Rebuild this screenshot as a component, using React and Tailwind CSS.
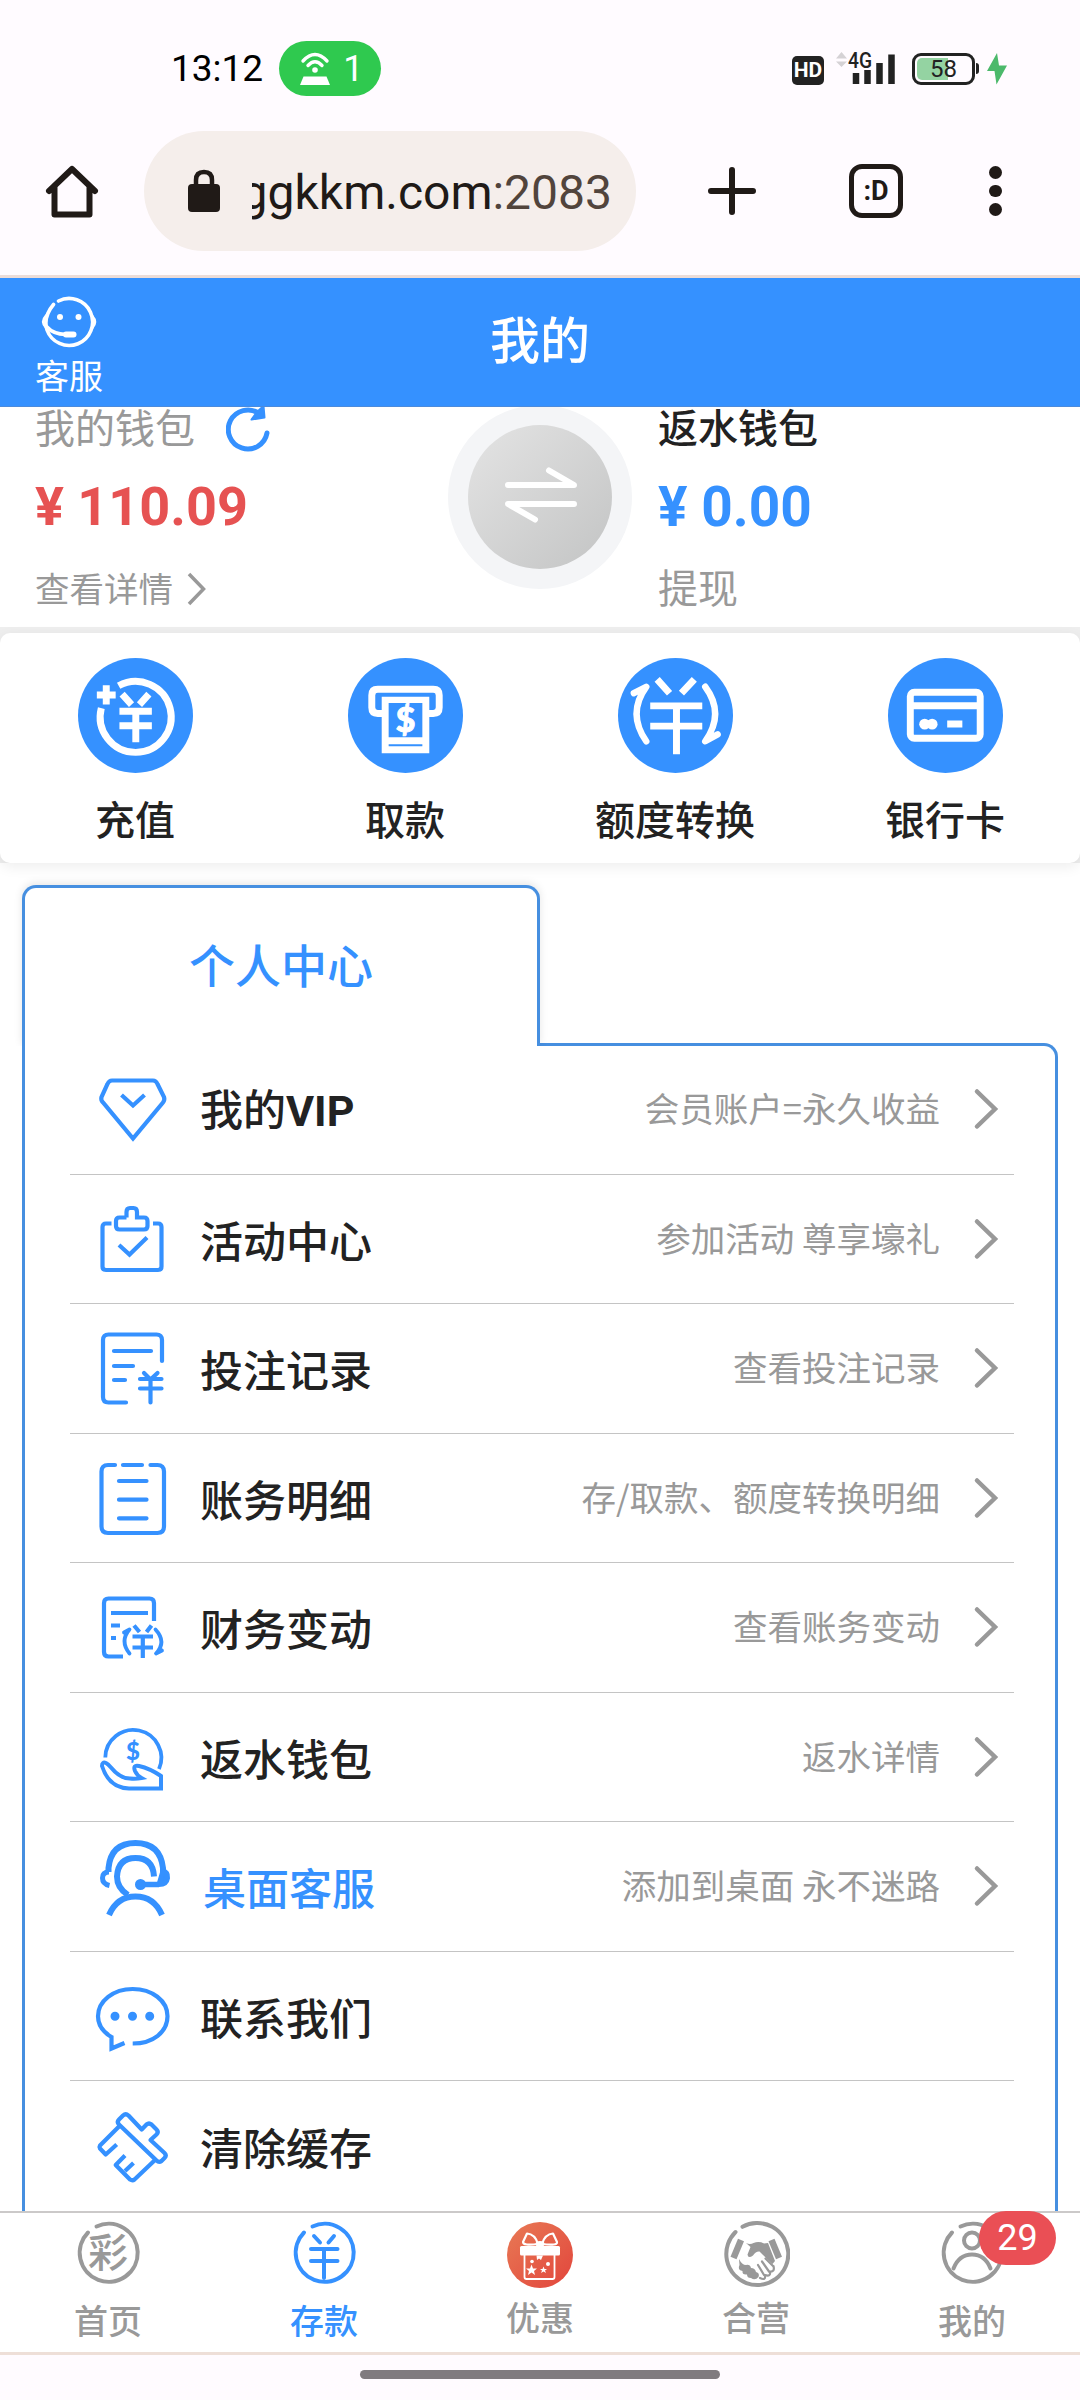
import { useState } from 'react';

const BLUE = '#3591ff';

const StatusBar = () => (
  <div className="flex h-[131px] items-start pt-[41px] pl-[171px] pr-[73px] font-[Roboto]">
    <span className="text-[37px] leading-[56px] text-black">13:12</span>
    <div className="ml-[16px] flex h-[55px] w-[102px] items-center rounded-full bg-[#2fc94f] pl-[19px]">
      <svg width="34" height="36" viewBox="0 0 34 36" fill="none" stroke="#fff" strokeWidth="3.4">
        <path d="M5 10Q17 -3 29 10M10 14.5Q17 7 24 14.5" strokeLinecap="round" />
        <circle cx="17" cy="19" r="2.8" fill="#fff" stroke="none" />
        <path d="M5.5 25.500H28.500L32 34H2Z" fill="#fff" stroke="none" />
      </svg>
      <span className="ml-[11px] text-[36px] leading-none text-white">1</span>
    </div>
    <div className="mt-[11px] ml-auto flex h-[33px] items-center">
      <span className="mt-[3px] h-[29px] w-[32px] rounded-[5px] bg-[#222] text-center text-[21px] leading-[29px] font-bold text-white">HD</span>
      <svg className="ml-[12px]" width="62" height="33" viewBox="0 0 62 33">
        <path d="M0 6.500 5.500 0 11 6.500ZM0 9.500H11L5.500 15Z" fill="#d5d2d5" />
        <text x="12" y="15.500" fontSize="22" fontWeight="500" fontFamily="Roboto" fill="#222" textLength="24" lengthAdjust="spacingAndGlyphs">4G</text>
        <path d="M20 21V32M31.500 18V32M43.500 11V32M55.500 2.500V32" stroke="#222" strokeWidth="6.500" />
      </svg>
      <div className="ml-[14px] flex h-[32px] w-[63px] items-center rounded-[9px] border-[3px] border-[#222] p-[2px]">
        <div className="h-full w-[31px] rounded-l-[5px] bg-[#94d3a2]"></div>
        <span className="-ml-[18px] text-[24px] leading-none text-[#222]">58</span>
      </div>
      <span className="ml-px h-[11px] w-[3px] rounded-r bg-[#222]"></span>
      <svg className="ml-[8px]" width="20" height="32" viewBox="0 0 20 32">
        <path d="M10 0 0 18H7.500L9.500 31.500 20 12.500H12Z" fill="#4cb96b" />
      </svg>
    </div>
  </div>
);

const BrowserBar = () => (
  <div className="flex h-[147px] items-start border-b-[3px] border-[#ecdcd8] pl-[44px]">
    <svg className="mt-[32px]" width="56" height="58" viewBox="0 0 56 58" fill="none" stroke="#201a17" strokeWidth="6" strokeLinejoin="round" strokeLinecap="round">
      <path d="M5 28 28 6 51 28M10.500 24V51.500H45.500V24" />
    </svg>
    <div className="ml-[44px] flex h-[120px] w-[492px] items-center rounded-full bg-[#f5eeeb] pl-[44px]">
      <svg width="32" height="44" viewBox="0 0 32 44">
        <path d="M8 18V11Q8 3 16 3T24 11V18" fill="none" stroke="#201a17" strokeWidth="4.500" />
        <rect x="0" y="15" width="32" height="28" rx="4" fill="#201a17" />
      </svg>
      <div className="mt-[4px] ml-[32px] flex w-[360px] justify-end overflow-hidden font-[Roboto] text-[48px] leading-[64px] whitespace-nowrap text-[#201a17]">
        ggkkm.com<span className="text-[#51443c]">:2083</span>
      </div>
    </div>
    <svg className="mt-[35px] ml-[71px]" width="50" height="50" viewBox="0 0 50 50" stroke="#201a17" strokeWidth="6" strokeLinecap="round">
      <path d="M25 4V46M4 25H46" />
    </svg>
    <div className="mt-[33px] ml-[92px] h-[54px] w-[54px] rounded-[13px] border-[5.500px] border-[#201a17] text-center font-[Roboto] text-[27px] leading-[44px] font-bold text-[#201a17]">:D</div>
    <div className="mt-[35px] ml-[86px] flex flex-col gap-[6px]">
      <span className="size-[12.500px] rounded-full bg-[#201a17]"></span>
      <span className="size-[12.500px] rounded-full bg-[#201a17]"></span>
      <span className="size-[12.500px] rounded-full bg-[#201a17]"></span>
    </div>
  </div>
);

const Header = () => (
  <header className="grid h-[129px] grid-cols-3 border-b border-[#4c8bdc] bg-[#3591ff] text-white">
    <div className="ml-[34px] flex w-[70px] flex-col items-center pt-[17px]">
      <svg width="60" height="54" viewBox="0 0 60 54" fill="none" stroke="#fff" strokeWidth="3.600" strokeLinecap="round">
        <path d="M19.500 6A23.500 23.500 0 1 1 8 35Q4 22 14.500 9.500" />
        <path d="M6.500 21Q1 27 7 33ZM53.500 21Q59 27 53.500 33Z" fill="#fff" strokeWidth="2" />
        <path d="M8 32Q14 39 27 39.500" />
        <path d="M27 39.500H34.500" strokeWidth="6" />
        <circle cx="21" cy="22" r="3" fill="#fff" stroke="none" />
        <circle cx="39.500" cy="22" r="3" fill="#fff" stroke="none" />
      </svg>
      <span className="mt-[7px] text-[34px] leading-[38px]">客服</span>
    </div>
    <h1 className="text-center text-[50px] leading-[119px] font-medium">我的</h1>
  </header>
);

const Wallets = () => (
  <section className="grid h-[220px] grid-cols-[448px_184px_1fr] overflow-hidden bg-white">
    <div className="flex flex-col pl-[35px]">
      <div className="flex h-[38px] items-center text-[40px] leading-[38px] text-[#999]">
        我的钱包
        <svg className="mt-[4px] ml-[31px] shrink-0" width="46" height="48" viewBox="0 0 46 48">
          <path d="M41 29A19.500 19.500 0 1 1 33 9.500" fill="none" stroke="#3591ff" strokeWidth="5" strokeLinecap="round" />
          <path d="M37.500 2 38.500 13.500 25.500 15.500 31 8Z" fill="#3591ff" stroke="#3591ff" strokeWidth="2" strokeLinejoin="round" />
        </svg>
      </div>
      <div className="h-[122px] font-[Roboto] text-[54px] leading-[124px] font-bold text-[#e65252]">¥ 110.09</div>
      <div className="flex h-[38px] items-center text-[34.5px] leading-[38px] text-[#999]">
        <span className="mt-[2px]">查看详情</span>
        <svg className="mt-[6px] ml-[12px]" width="24" height="34" viewBox="0 0 24 34" fill="none" stroke="#999" strokeWidth="3.500">
          <path d="M4 2 18.500 17 4 32" />
        </svg>
      </div>
    </div>
    <div className="-mt-[2px] flex size-[184px] items-center justify-center rounded-full bg-[#f4f5f7]">
      <div className="flex size-[144px] items-center justify-center rounded-full bg-linear-to-br from-[#e4e4e4] to-[#c3c4c4]">
        <svg width="76" height="60" viewBox="0 0 76 60" fill="none" stroke="#fff" strokeWidth="6" strokeLinecap="round" strokeLinejoin="round">
          <path d="M6 18H72L47 3.500M72 37H6L33 52.500" />
        </svg>
      </div>
    </div>
    <div className="flex flex-col pl-[26px] text-[40px]">
      <div className="h-[38px] leading-[38px] font-medium text-[#222]">返水钱包</div>
      <div className="h-[122px] font-[Roboto] text-[55px] leading-[124px] font-bold text-[#3591ff]">¥ 0.00</div>
      <div className="h-[38px] leading-[38px] text-[#999]">提现</div>
    </div>
  </section>
);

const actions = [
  {
    label: '充值',
    icon: (
      <>
        <path d="M41 28A35.800 35.800 0 1 1 23.500 50.500" strokeWidth="7" />
        <path d="M28.500 27.500V47M19 37.300H38" strokeWidth="7" />
        <path d="M44.500 36.500 54 47M71.500 36.500 62 47M41.800 53.700H74.500M41.800 68.300H74.500M58.300 51V85" strokeWidth="7" />
      </>
    ),
  },
  {
    label: '取款',
    icon: (
      <>
        <path d="M36 56H30Q24 56 24 50V37.500Q24 31.500 30 31.500H86Q92 31.500 92 37.500V50Q92 56 86 56H80" strokeWidth="7" />
        <path d="M34 39H82V96H34Z" fill="#fff" stroke="none" />
        <path d="M41 45.500H75V80H41ZM41 87H75V89H41Z" fill={BLUE} stroke="none" />
        <text x="58" y="75" fontSize="34" fontWeight="900" fontFamily="Lato" textAnchor="middle" fill="#fff" strokeWidth="1">$</text>
      </>
    ),
  },
  {
    label: '额度转换',
    icon: (
      <>
        <path d="M39.500 21.500 52 35.500M77 21.500 64 35.500M32.500 48.300H85M32.500 68.700H85M59 48V97" strokeWidth="7" />
        <path d="M28.500 84Q9 56 28.500 29L16 35.500M88 29Q108 56 88 84L100.500 77" strokeWidth="6.500" strokeLinecap="round" strokeLinejoin="round" />
      </>
    ),
  },
  {
    label: '银行卡',
    icon: (
      <>
        <rect x="22.500" y="34.500" width="70.500" height="46.500" rx="4" strokeWidth="7" />
        <path d="M22 48.200H93M59.700 66.500H75" strokeWidth="7" />
        <circle cx="37" cy="66.700" r="5.500" fill="#fff" stroke="none" />
        <circle cx="44.500" cy="66.700" r="5.500" fill="#fff" stroke="none" />
      </>
    ),
  },
];

const QuickActions = () => (
  <section className="bg-[#eeeeee] pt-[6px]">
    <div className="grid h-[230px] grid-cols-4 rounded-[10px] bg-white shadow-[0_4px_14px_rgba(0,0,0,0.07)]">
      {actions.map((item) => (
        <div key={item.label} className="flex flex-col items-center pt-[25px]">
          <svg className="rounded-full bg-[#3591ff]" width="115" height="115" viewBox="0 0 116 116" fill="none" stroke="#fff">
            {item.icon}
          </svg>
          <span className="mt-[20px] text-[40px] leading-[50px] font-medium text-[#222]">{item.label}</span>
        </div>
      ))}
    </div>
  </section>
);

const menu = [
  {
    label: <>我的<span className="font-[Roboto] font-bold">VIP</span></>,
    hint: '会员账户=永久收益',
    icon: (
      <path d="M19 11.500H60Q63 11.500 64.500 15L71 28Q72 31 70 33.500L40 69.500 10 33.500Q7.500 31 8.500 28L14.500 15Q16 11.500 19 11.500ZM28.500 26 40 36.500 51.500 26" />
    ),
  },
  {
    label: '活动中心',
    hint: '参加活动 尊享壕礼',
    icon: (
      <path d="M18.500 24.500H13Q9.500 24.500 9.500 28V67.500Q9.500 71 13 71H65Q68.500 71 68.500 67.500V28Q68.500 24.500 65 24.500H60M33.500 18.500V13Q33.500 9 37 9H40.500Q44 9 44 13V18.500H51Q54.500 18.500 54.500 22V27Q54.500 30.500 51 30.500H26.500Q23 30.500 23 27V22Q23 18.500 26.500 18.500H33.500M26 46 36.500 55.500 54 38.500" />
    ),
  },
  {
    label: '投注记录',
    hint: '查看投注记录',
    icon: (
      <path strokeLinecap="round" d="M69 33V12Q69 6.500 63.500 6.500H15.500Q10 6.500 10 12V69Q10 74.500 15.500 74.500H33M21 23H58M21 38H40M21 52H32M51 45 57.500 51.500 64.500 45M47 51H68.500M47 60.500H68.500M57.500 52V74.500" />
    ),
  },
  {
    label: '账务明细',
    hint: '存/取款、额度转换明细',
    icon: (
      <path strokeLinecap="round" d="M22 7H15Q8.500 7 8.500 13.500V68.500Q8.500 75 15 75H64.500Q71 75 71 68.500V13.500Q71 7 64.500 7H57.500M30 7H49M26 23H53.500M26 41.700H53.500M26 60.300H53.500" />
    ),
  },
  {
    label: '财务变动',
    hint: '查看账务变动',
    icon: (
      <>
        <path d="M61 34V16Q61 11.500 56.500 11.500H15.500Q11 11.500 11 16V65Q11 69.500 15.500 69.500H30M18 26H55M18 38.500H27M18 51H23M41 38.500 46.500 45M58.500 38.500 53.500 45M39.500 49.500H60M39.500 60.500H60M49.800 49V71" />
        <path strokeLinecap="round" strokeLinejoin="round" strokeWidth="3.800" d="M36.500 66.500Q26.500 54 36.500 42.500L31 45.500M62.500 42.500Q74 55 63 66.500L69 63.500" />
      </>
    ),
  },
  {
    label: '返水钱包',
    hint: '返水详情',
    icon: (
      <>
        <path d="M12.300 40.500A28 28 0 1 1 66 52" strokeWidth="3.800" />
        <path strokeWidth="4" d="M9 49Q9 44.500 13 46Q15 47 18 50.500Q27 61.500 37 61.500Q43 62 48.500 61Q44 58.500 42 54Q39.500 47.500 46 49Q57 51.500 68 59V71.500H36Q16 71 9 49Z" />
        <text x="40" y="43" fontSize="24" fontWeight="900" fontFamily="Lato" textAnchor="middle" fill={BLUE} stroke="none">$</text>
      </>
    ),
  },
  {
    label: '桌面客服',
    hint: '添加到桌面 永不迷路',
    active: true,
    icon: (
      <>
        <path strokeWidth="6" d="M15.500 26V22Q18 -3 42.500 -3T70 22V26" />
        <path strokeWidth="5" d="M16 26Q9.500 26 9.500 32Q9.500 38 16.500 39.500" />
        <path strokeWidth="5" fill={BLUE} d="M70 25Q75 26 74.500 32Q73.500 38.500 66 38.500Z" />
        <path strokeWidth="5.500" d="M66 38.500H48" />
        <circle cx="47.500" cy="38.500" r="5.500" fill={BLUE} stroke="none" />
        <path strokeWidth="6" d="M61 30.500Q60 12 42.500 12T24 30.500Q24 42 35 49" />
        <path strokeWidth="6" d="M16 69Q24 50.500 42.500 50.500T69 69" />
      </>
    ),
  },
  {
    label: '联系我们',
    icon: (
      <>
        <path d="M39.700 67.500C60 67.500 74.500 56 74.500 40.300S59 13 39.700 13 5 25 5 40.300C5 49 10 56 18.500 61V72.500L31.500 67" />
        <path d="M22 40.300H22.010M39.500 40.300H39.510M56.700 40.300H56.710" strokeWidth="9" strokeLinecap="round" />
      </>
    ),
  },
  {
    label: '清除缓存',
    icon: (
      <>
        <path strokeLinejoin="round" d="M30 9.500Q32.700 7 35.500 9.500L48.700 23.500 53.500 18.500Q56 16.500 58.500 18.500L63.500 23.500Q66 26 63.500 28.500L57.500 34 71.500 47Q74 49.500 71.500 52L68.500 55Q66 57 63.500 54.500L26 18.500Q23.500 16 26 13.500Z" />
        <path strokeLinejoin="round" d="M26.500 20 7 39.500Q6 41 7 42.500L12.700 48.500 23.700 38.500M32 49.500 22.700 59 37 73.500Q39.500 75 41.500 73.500L61.500 54.500M40.500 57 32 65" />
      </>
    ),
  },
];

const ProfilePanel = () => (
  <section className="flex h-[1348px] flex-col overflow-hidden pt-[22px] pl-[22px]">
    <div className="z-10 -mb-[3px] h-[161px] w-[518px] shrink-0 rounded-t-[14px] border-x-[3px] border-t-[3px] border-[#468fe0] bg-white text-center text-[46px] leading-[150px] font-medium text-[#3591ff] shadow-[0_-2px_8px_rgba(0,0,0,0.1)] [clip-path:inset(-12px_-12px_0_-12px)]">
      个人中心
    </div>
    <div className="w-[1036px] flex-1 rounded-tr-[14px] border-x-[3px] border-t-[3px] border-[#468fe0] bg-white pr-[41px] pl-[45px]">
      <div className="-mt-px">
        {menu.map((item, i) => (
          <div
            key={i}
            className={`flex h-[129.5px] items-center pl-[23px] ${i < menu.length - 1 ? 'border-b border-[#c4c4c4]' : ''}`}
          >
            <svg className="shrink-0 overflow-visible" width="80" height="80" viewBox="0 0 80 80" fill="none" stroke={BLUE} strokeWidth="4.200">
              {item.icon}
            </svg>
            <span className={`text-[43px] leading-[60px] font-medium ${item.active ? 'ml-[30px] text-[#3591ff]' : 'ml-[27px] text-[#222]'}`}>
              {item.label}
            </span>
            {item.hint && (
              <>
                <span className="mr-[33px] mb-[4px] ml-auto text-[34.5px] leading-[50px] text-[#999]">{item.hint}</span>
                <svg className="mr-[15px]" width="26" height="42" viewBox="0 0 26 42" fill="none" stroke="#999" strokeWidth="4.500" strokeLinecap="round">
                  <path d="M4 3.500 22 21 4 38.500" />
                </svg>
              </>
            )}
          </div>
        ))}
      </div>
    </div>
  </section>
);

const Ring = ({ children }) => (
  <svg width="64" height="64" viewBox="0 0 64 64" fill="none" stroke="currentColor" strokeWidth="4" strokeLinecap="round">
    <path d="M20.500 5.500A29 29 0 1 1 12 11.500" />
    {children}
  </svg>
);

const tabs = [
  {
    label: '首页',
    icon: (
      <Ring>
        <text x="32" y="46" fontSize="40" fontFamily="Noto Sans CJK SC" fontWeight="500" textAnchor="middle" fill="currentColor" stroke="none">彩</text>
      </Ring>
    ),
  },
  {
    label: '存款',
    icon: (
      <Ring>
        <path d="M22 15 28 21.500M42 15 36.500 21.500M19 28H45.500M19 40H45.500M32 28V57" />
      </Ring>
    ),
  },
  {
    label: '优惠',
    raised: true,
    icon: (
      <svg width="68" height="68" viewBox="0 0 68 68" fill="none" stroke="#fff" strokeWidth="1.800">
        <defs>
          <linearGradient id="gift" x1="0" y1="0" x2="1" y2="1">
            <stop offset="0" stopColor="#e87a55" />
            <stop offset="1" stopColor="#e2453c" />
          </linearGradient>
        </defs>
        <circle cx="34" cy="34" r="33" fill="url(#gift)" stroke="none" />
        <path d="M32 23Q17 25 17 21L21 12.500Q29 13 32 23ZM36 23Q52 25 51 21L47 12.500Q39 13 36 23Z" strokeLinejoin="round" strokeWidth="2.200" />
        <ellipse cx="34" cy="23" rx="4.500" ry="3" fill="#fff" stroke="none" />
        <rect x="14" y="25" width="40" height="9.500" rx="1.500" fill="#fff" stroke="none" />
        <path d="M18.500 34V56Q18.500 58 20.500 58H46.500Q48.500 58 48.500 56V34" />
        <path d="M25.500 43.500 27 47.500H31L28 50 29 54 25.500 51.500 22 54 23 50 20 47.500H24ZM37.500 45.500 38.500 48H41L39 49.500 40 52 37.500 50.500 35 52 36 49.500 34 48H36.500ZM30.500 34.500H37L35 39 33 37.500 31 39Z" fill="#fff" stroke="none" />
        <circle cx="26" cy="40.500" r="1.800" fill="#fff" stroke="none" />
        <circle cx="42" cy="43" r="2" fill="#fff" stroke="none" />
      </svg>
    ),
  },
  {
    label: '合营',
    raised: true,
    icon: (
      <svg width="68" height="68" viewBox="0 0 68 68" fill="none" stroke="currentColor" strokeWidth="4" strokeLinecap="round">
        <path d="M20.500 5.800A31 31 0 1 1 13.500 11" />
        <path d="M19 19 11.500 37" strokeWidth="6.500" strokeLinecap="butt" />
        <path d="M49.500 19 57 37" strokeWidth="6.500" strokeLinecap="butt" />
        <path d="M24 22Q28 24 31.500 22Q37 20 42 22.500L46 22 53 40 50.500 43Q43 36 37.500 30.500Q34 30 31 34.500Q26 38 25.500 33.500L28.500 26Z" fill="currentColor" stroke="none" />
        <path d="M17 38Q20 44 24 44Q28 43 29 47Q33 47 34 51Q38 52 36.500 56Q33 60 29 57Q25 57 25 53.500Q20 54 20.500 50Q15 49 17.500 44Z" fill="currentColor" stroke="none" />
        <path d="M38 57Q44 60 43 54Q49 56 48 50.500Q53 51 51.500 45M36 44 42 54M40 40.500 47 50.500M43.500 37.500 51 45" strokeWidth="2.200" />
      </svg>
    ),
  },
  {
    label: '我的',
    badge: 29,
    icon: (
      <Ring>
        <circle cx="32" cy="19.500" r="8" />
        <path d="M13.500 47.500Q19 33.500 32 33.500T50.500 47.500" />
      </Ring>
    ),
  },
];

const App = () => {
  const [current, setCurrent] = useState('存款');

  return (
    <div className="flex h-[2400px] w-[1080px] flex-col overflow-hidden bg-[#fffbff] font-['Noto_Sans_CJK_SC',sans-serif]">
      <StatusBar />
      <BrowserBar />
      <Header />
      <main className="h-[1804px] shrink-0 bg-white">
        <Wallets />
        <QuickActions />
        <ProfilePanel />
      </main>
      <nav className="grid h-[144px] shrink-0 grid-cols-5 border-t-2 border-b-[3px] border-t-[#cbc9c9] border-b-[#eedfd8] bg-white">
        {tabs.map((tab) => (
          <button
            key={tab.label}
            type="button"
            onClick={() => setCurrent(tab.label)}
            className={`relative flex flex-col items-center justify-start pt-[8px] ${current === tab.label ? 'text-[#3591ff]' : 'text-[#999]'}`}
          >
            {tab.icon}
            <span className={`text-[34px] leading-[50px] font-medium ${tab.raised ? 'mt-[3px]' : 'mt-[10px]'}`}>{tab.label}</span>
            {tab.badge && (
              <span className="absolute -top-[2px] left-[115px] h-[54px] w-[77px] rounded-full bg-[#ea4f55] text-center font-[Roboto] text-[36px] leading-[54px] text-white">
                {tab.badge}
              </span>
            )}
          </button>
        ))}
      </nav>
      <div className="mx-auto mt-[15px] h-[9px] w-[360px] rounded-full bg-[#807b7f]"></div>
    </div>
  );
};

export default App;
